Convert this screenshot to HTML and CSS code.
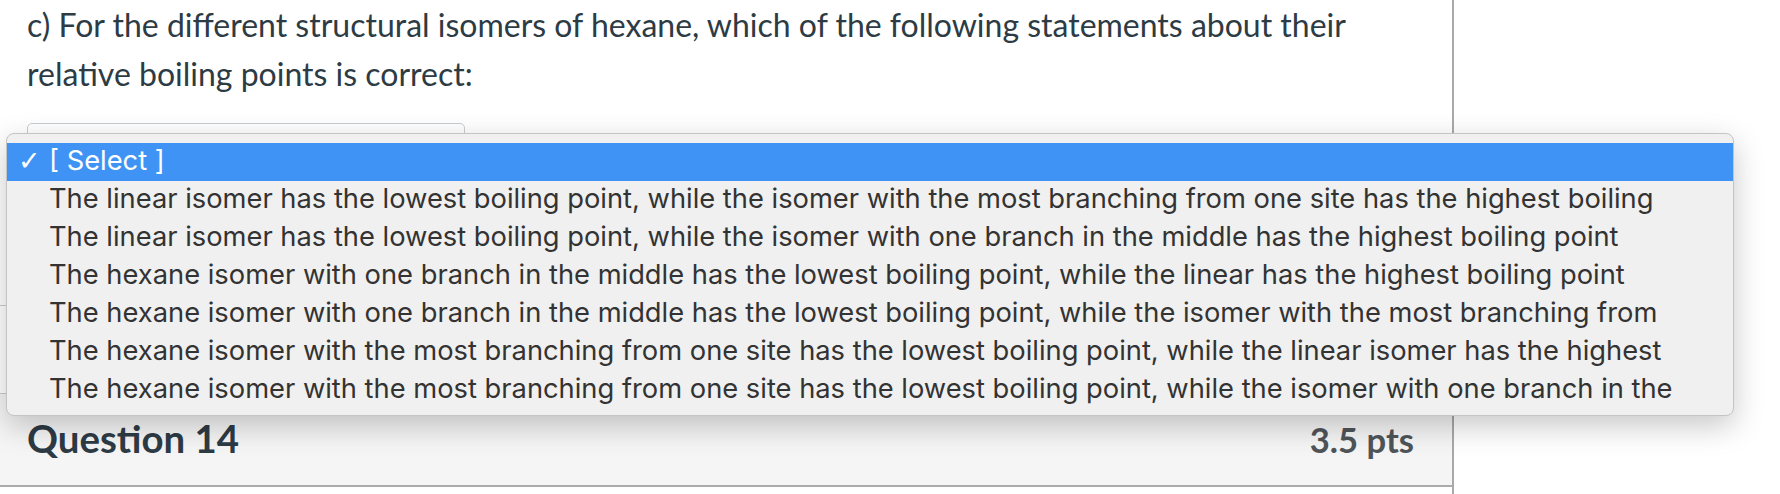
FILE: index.html
```html
<!DOCTYPE html>
<html>
<head>
<meta charset="utf-8">
<link rel="stylesheet" href="styles.css">
</head>
<body>
<div class="page">
  <div class="quiz">
    <div class="question">
      <p class="qtext">c) For the different structural isomers of hexane, which of the following statements about their relative boiling points is correct:</p>
      <div class="select-box"></div>
    </div>
    <div class="gap"></div>
    <div class="qheader">
      <span class="qname">Question 14</span>
      <span class="qpts">3.5 pts</span>
    </div>
  </div>
  <ul class="menu">
    <li class="opt selected"><span class="check">✓</span>[ Select ]</li>
    <li class="opt"><span class="check"></span>The linear isomer has the lowest boiling point, while the isomer with the most branching from one site has the highest boiling</li>
    <li class="opt"><span class="check"></span>The linear isomer has the lowest boiling point, while the isomer with one branch in the middle has the highest boiling point</li>
    <li class="opt"><span class="check"></span>The hexane isomer with one branch in the middle has the lowest boiling point, while the linear has the highest boiling point</li>
    <li class="opt"><span class="check"></span>The hexane isomer with one branch in the middle has the lowest boiling point, while the isomer with the most branching from</li>
    <li class="opt"><span class="check"></span>The hexane isomer with the most branching from one site has the lowest boiling point, while the linear isomer has the highest</li>
    <li class="opt"><span class="check"></span>The hexane isomer with the most branching from one site has the lowest boiling point, while the isomer with one branch in the</li>
  </ul>
</div>
</body>
</html>
```

FILE: styles.css
```css
html, body {
  margin: 0;
  padding: 0;
  background: #ffffff;
  overflow: hidden;
}

.page {
  position: relative;
  width: 1780px;
  height: 494px;
}

.quiz {
  width: 1454px;
  height: 494px;
  border-right: 2px solid #a9a9a9;
  box-sizing: border-box;
  display: flex;
  flex-direction: column;
}

.question {
  height: 306px;
  border-bottom: 1px solid #c7cdd1;
  box-sizing: border-box;
  padding: 0 0 0 27px;
}

.qtext {
  margin: 0;
  max-width: 1400px;
  font-family: Lato, "Liberation Sans", sans-serif;
  font-size: 32px;
  line-height: 49px;
  color: #2d3b45;
}

.select-box {
  margin-top: 25px;
  width: 438px;
  height: 44px;
  border: 1px solid #c7cdd1;
  border-radius: 5px;
  box-sizing: border-box;
  background: #ffffff;
}

.gap {
  height: 87px;
}

.qheader {
  flex: 1;
  display: flex;
  justify-content: space-between;
  align-items: baseline;
  background: #f5f5f5;
  border-top: 1px solid #c7cdd1;
  border-bottom: 2px solid #ababab;
  padding: 24px 38px 0 27px;
  margin-bottom: 7px;
  font-family: Lato, "Liberation Sans", sans-serif;
  font-weight: 700;
}

.qname {
  font-size: 38.4px;
  line-height: 40px;
  color: #2d3b45;
}

.qpts {
  font-size: 34.6px;
  line-height: 40px;
  color: #4f5459;
}

.menu {
  position: absolute;
  left: 6px;
  top: 133px;
  width: 1728px;
  height: 283px;
  margin: 0;
  padding: 9px 0 8px 0;
  box-sizing: border-box;
  list-style: none;
  background: #f0f0f0;
  border: 1px solid #c4c4c4;
  border-radius: 8px;
  box-shadow: 0 10px 30px rgba(0, 0, 0, 0.22);
  overflow: hidden;
}

.opt {
  display: flex;
  align-items: center;
  height: 38px;
  padding-bottom: 3px;
  box-sizing: border-box;
  font-family: Inter, "Liberation Sans", sans-serif;
  font-size: 27.3px;
  color: #333333;
  white-space: nowrap;
}

.opt.selected {
  background: #3f93f4;
  color: #ffffff;
}

.check {
  width: 42px;
  padding-left: 11px;
  box-sizing: border-box;
  flex: none;
  font-family: "DejaVu Sans", sans-serif;
  font-size: 27px;
}
```
